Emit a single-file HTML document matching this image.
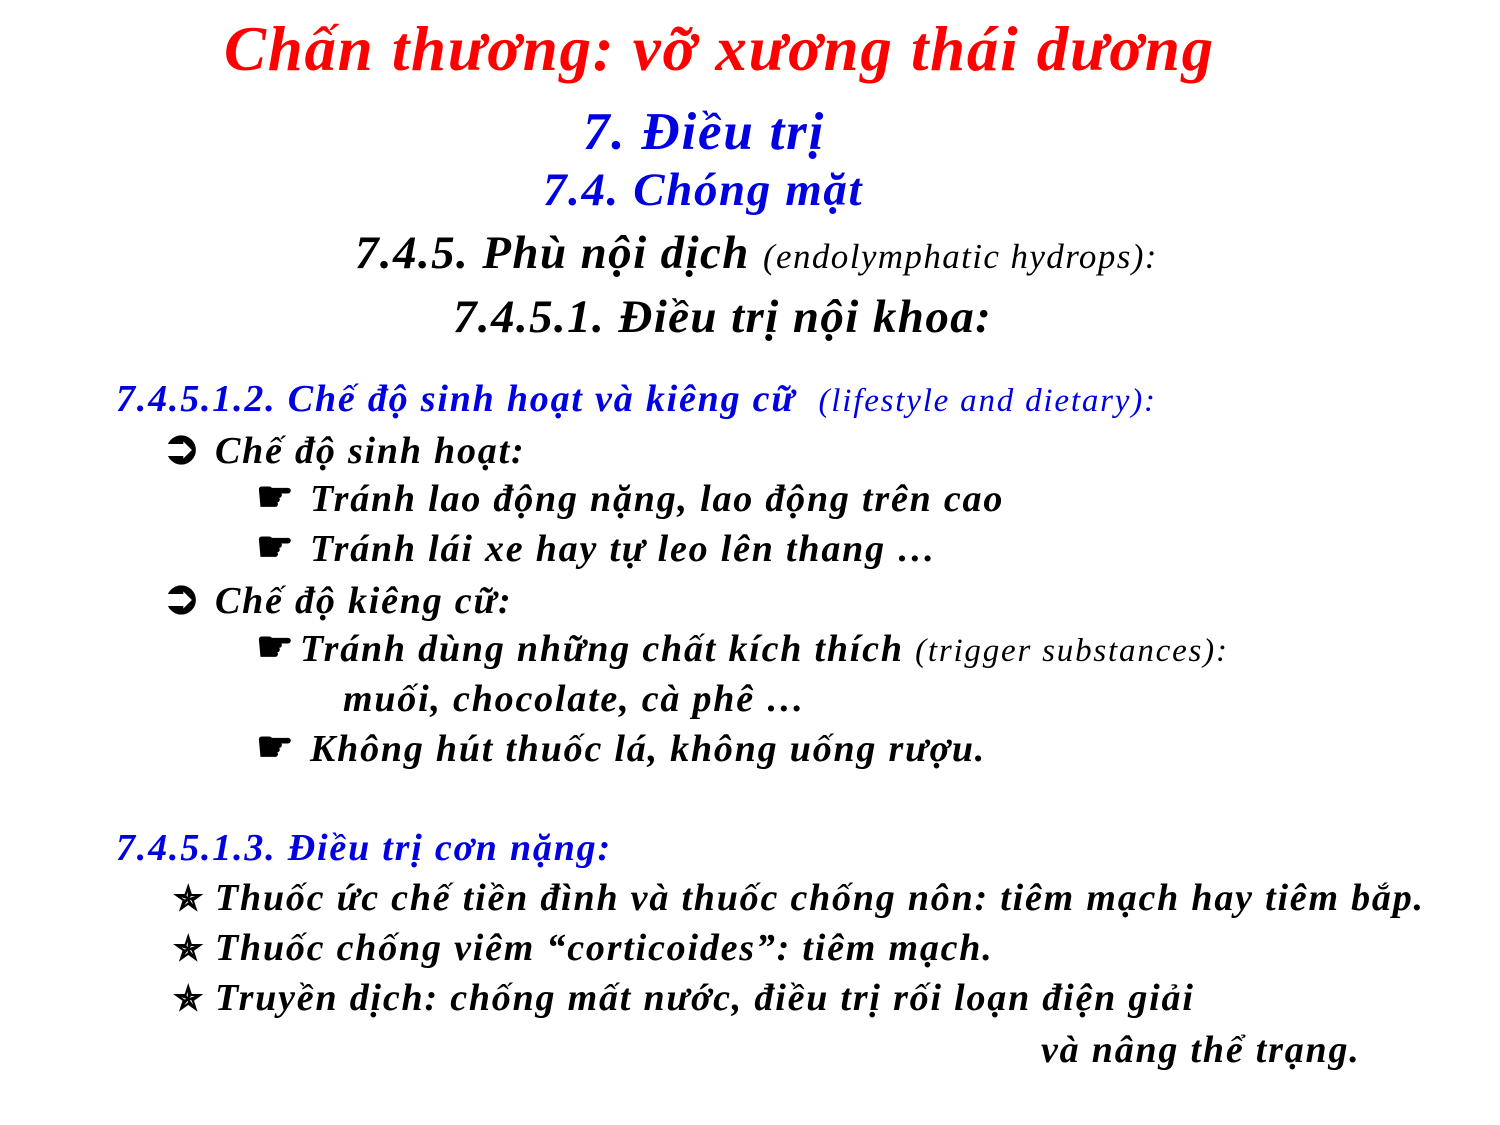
<!DOCTYPE html>
<html><head><meta charset="utf-8"><style>
html,body{margin:0;padding:0;background:#fff;}
body{width:1500px;height:1125px;position:relative;overflow:hidden;font-family:"Liberation Serif","DejaVu Serif",serif;font-style:italic;font-weight:bold;color:#000;}
.l{position:absolute;white-space:nowrap;line-height:1;letter-spacing:1.8px;}
.r{color:#f00;}
.b{color:#0000e0;}
.n{font-weight:normal;}
.ic{display:inline-block;font-style:normal;letter-spacing:0;}
</style></head><body>
<div class="l r" style="left:224px;top:18px;font-size:63px;letter-spacing:1.7px;">Chấn thương: vỡ xương thái dương</div>
<div class="l b" style="left:583px;top:106px;font-size:53px;letter-spacing:1.8px;">7. Điều trị</div>
<div class="l b" style="left:543px;top:167px;font-size:47px;letter-spacing:1.6px;">7.4. Chóng mặt</div>
<div class="l" style="left:355px;top:230px;font-size:47px;letter-spacing:1.4px;">7.4.5. Phù nội dịch <span class="n" style="font-size:35px;">(endolymphatic hydrops):</span></div>
<div class="l" style="left:453px;top:294px;font-size:47px;letter-spacing:1.4px;">7.4.5.1. Điều trị nội khoa:</div>

<div class="l b" style="left:116px;top:380px;font-size:38px;">7.4.5.1.2. Chế độ sinh hoạt và kiêng cữ &nbsp;<span class="n" style="font-size:33px;">(lifestyle and dietary):</span></div>
<div class="l" style="left:162px;top:429px;font-size:38px;"><span class="ic" style="width:53px;font-size:46px;line-height:38px;">➲</span>Chế độ sinh hoạt:</div>
<div class="l" style="left:256px;top:479px;font-size:38px;"><span class="ic" style="width:54px;font-size:42px;line-height:38px;">☛</span>Tránh lao động nặng, lao động trên cao</div>
<div class="l" style="left:256px;top:529px;font-size:38px;"><span class="ic" style="width:54px;font-size:42px;line-height:38px;">☛</span>Tránh lái xe hay tự leo lên thang …</div>
<div class="l" style="left:162px;top:579px;font-size:38px;"><span class="ic" style="width:53px;font-size:46px;line-height:38px;">➲</span>Chế độ kiêng cữ:</div>
<div class="l" style="left:256px;top:629px;font-size:38px;"><span class="ic" style="width:44px;font-size:42px;line-height:38px;">☛</span>Tránh dùng những chất kích thích <span class="n" style="font-size:33px;">(trigger substances):</span></div>
<div class="l" style="left:343px;top:680px;font-size:38px;">muối, chocolate, cà phê …</div>
<div class="l" style="left:256px;top:729px;font-size:38px;"><span class="ic" style="width:54px;font-size:42px;line-height:38px;">☛</span>Không hút thuốc lá, không uống rượu.</div>

<div class="l b" style="left:116px;top:829px;font-size:38px;">7.4.5.1.3. Điều trị cơn nặng:</div>
<div class="l" style="left:174px;top:879px;font-size:38px;"><span class="ic" style="width:41px;font-size:34px;">✯</span>Thuốc ức chế tiền đình và thuốc chống nôn: tiêm mạch hay tiêm bắp.</div>
<div class="l" style="left:174px;top:929px;font-size:38px;"><span class="ic" style="width:41px;font-size:34px;">✯</span>Thuốc chống viêm “corticoides”: tiêm mạch.</div>
<div class="l" style="left:174px;top:979px;font-size:38px;"><span class="ic" style="width:41px;font-size:34px;">✯</span>Truyền dịch: chống mất nước, điều trị rối loạn điện giải</div>
<div class="l" style="left:1041px;top:1031px;font-size:38px;">và nâng thể trạng.</div>
</body></html>
